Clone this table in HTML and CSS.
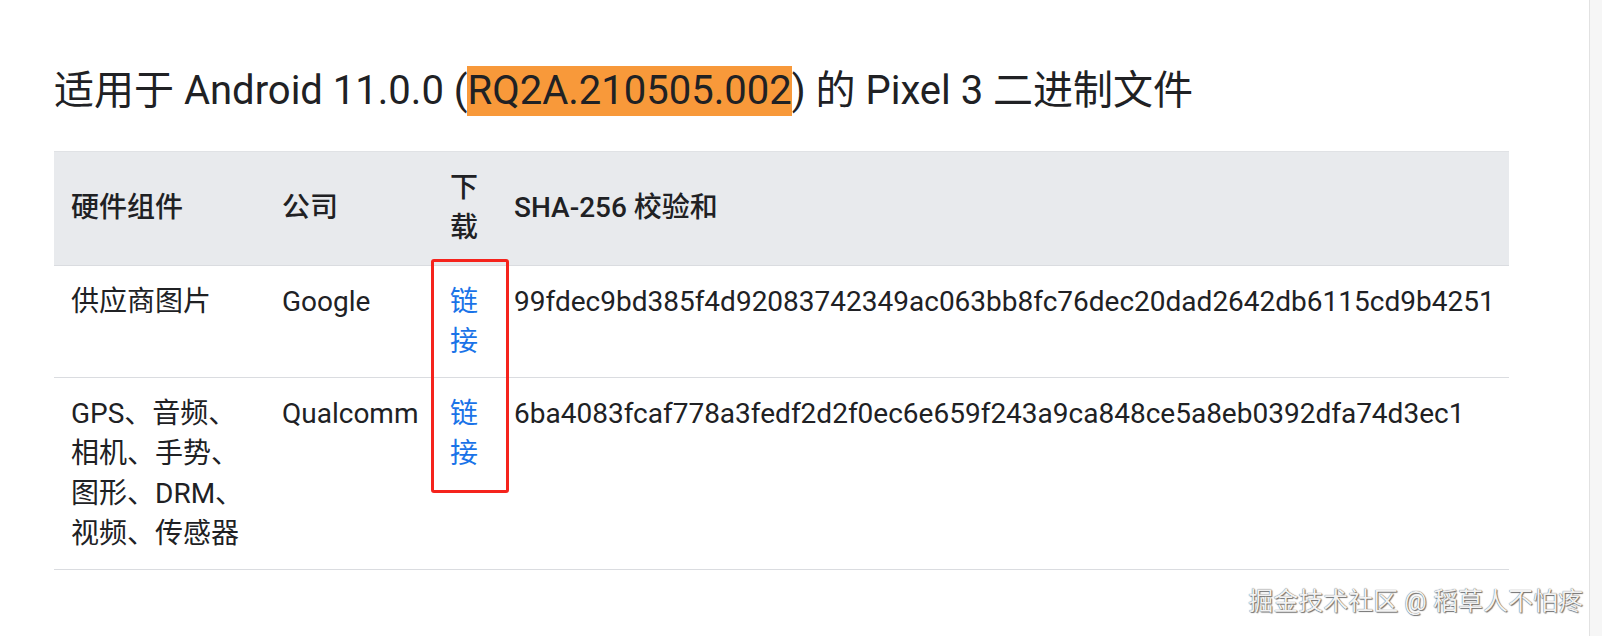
FILE: index.html
```html
<!DOCTYPE html>
<html lang="zh-CN">
<head>
  <meta charset="UTF-8">
  <meta name="viewport" content="width=device-width, initial-scale=1.0">
  <title>Pixel 3 二进制文件</title>
  <link rel="stylesheet" href="styles.css">
</head>
<body>
  <div class="page">
    <h1 class="title">适用于 Android 11.0.0 (<span class="build">RQ2A.210505.002</span>) 的 Pixel 3 二进制文件</h1>

    <div class="table-wrap">
      <table class="binaries">
        <colgroup>
          <col class="col-part">
          <col class="col-company">
          <col class="col-download">
          <col class="col-hash">
        </colgroup>
        <thead>
          <tr>
            <th>硬件组件</th>
            <th>公司</th>
            <th>下载</th>
            <th>SHA-256 校验和</th>
          </tr>
        </thead>
        <tbody>
          <tr>
            <td>供应商图片</td>
            <td>Google</td>
            <td><a href="#">链接</a></td>
            <td>99fdec9bd385f4d92083742349ac063bb8fc76dec20dad2642db6115cd9b4251</td>
          </tr>
          <tr>
            <td>GPS、音频、相机、手势、图形、DRM、视频、传感器</td>
            <td>Qualcomm</td>
            <td><a href="#">链接</a></td>
            <td>6ba4083fcaf778a3fedf2d2f0ec6e659f243a9ca848ce5a8eb0392dfa74d3ec1</td>
          </tr>
        </tbody>
      </table>
      <!-- 标注框 -->
      <div class="note-box"></div>
    </div>
  </div>
  <div class="scrollbar"></div>

  <div class="watermark">掘金技术社区 @ 稻草人不怕疼</div>
</body>
</html>
```

FILE: styles.css
```css
* {
  box-sizing: border-box;
}
body {
  font-family: Roboto, "Noto Sans CJK SC", sans-serif;
  margin: 0;
  padding: 0;
  background: #fff;
  color: #202124;
  display: flex;
  min-height: 100vh;
  position: relative;
}
.page {
  flex: 1;
  padding: 66px 0 0 54px;
}
.scrollbar {
  width: 13px;
  background: #f6f6f6;
  border-left: 1px solid #e2e2e2;
}
.title {
  font-size: 40px;
  font-weight: 400;
  line-height: 50px;
  margin: 0 0 35px;
  white-space: nowrap;
}
.build {
  display: inline-block;
  background: #f8993a;
  line-height: 50px;
}
.table-wrap {
  position: relative;
  width: 1455px;
}
.binaries {
  width: 1455px;
  table-layout: fixed;
  border-collapse: collapse;
  font-size: 28px;
  line-height: 40px;
}
.col-part {
  width: 211px;
}
.col-company {
  width: 168px;
}
.col-download {
  width: 64px;
}
.col-hash {
  width: 1012px;
}
.binaries th {
  background: #e8eaed;
  font-weight: 500;
  text-align: left;
  padding: 16px 17px 17px;
  border-top: 1px solid #e0e2e5;
  border-bottom: 1px solid #dadce0;
  vertical-align: middle;
}
.binaries td {
  padding: 16px 17px 15px;
  border-bottom: 1px solid #dadce0;
  vertical-align: top;
  white-space: normal;
}
.binaries td:last-child {
  white-space: nowrap;
}
.binaries a {
  color: #1a73e8;
  text-decoration: none;
}
.note-box {
  position: absolute;
  left: 377px;
  top: 108px;
  width: 78px;
  height: 234px;
  border: 3px solid #f5231c;
  border-radius: 3px;
}
.watermark {
  position: absolute;
  right: 19px;
  top: 589px;
  font-size: 25px;
  line-height: 25px;
  color: #f2f2f2;
  text-shadow: 0 0 1px #444, 1px 1px 1px #777;
  white-space: nowrap;
}
```
